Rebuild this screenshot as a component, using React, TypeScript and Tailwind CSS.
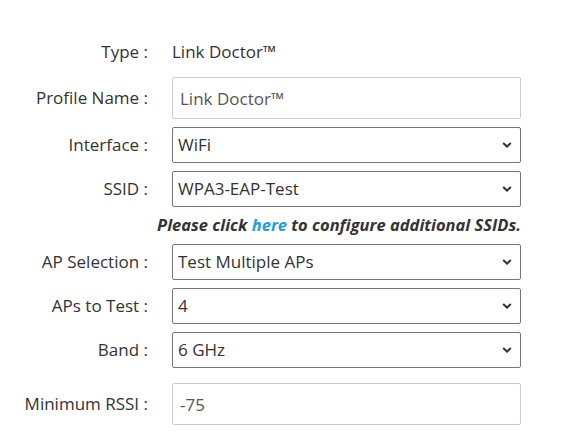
import { ReactNode } from 'react';

function Row({ label, children, className = '' }: { label: string; children: ReactNode; className?: string }) {
  return (
    <div className={`flex items-center ${className}`}>
      <div className="w-[148px] shrink-0 text-right text-[17px] text-[#333]">{label}</div>
      <div className="ml-[24px] w-[349px]">{children}</div>
    </div>
  );
}

function TextBox({ value }: { value: string }) {
  return (
    <input
      readOnly
      value={value}
      className="h-[42px] w-full border border-[#cccccc] rounded-[2px] px-[7px] text-[17px] text-[#555] outline-none"
    />
  );
}

function Select({ value, options }: { value: string; options: string[] }) {
  return (
    <div className="relative">
      <select
        defaultValue={value}
        className="h-[36px] w-full appearance-none border border-[#767676] rounded-[2px] pl-[5px] pr-8 text-[17px] text-[#333] outline-none"
      >
        {options.map((o) => (
          <option key={o}>{o}</option>
        ))}
      </select>
      <svg
        className="pointer-events-none absolute right-[9px] top-1/2 -translate-y-1/2"
        width="10"
        height="7"
        viewBox="0 0 10 7"
      >
        <path d="M1.2 1.5l3.8 3.6 3.8-3.6" fill="none" stroke="#333" strokeWidth="2" />
      </svg>
    </div>
  );
}

export default function App() {
  return (
    <div className="min-h-screen bg-white pt-[34px]" style={{ fontFamily: '"Open Sans", sans-serif' }}>
      <Row label="Type :" className="h-[36px]">
        <span className="text-[17px] text-[#333]">Link Doctor™</span>
      </Row>
      <Row label="Profile Name :" className="mt-[7px]">
        <TextBox value="Link Doctor™" />
      </Row>
      <Row label="Interface :" className="mt-[8px]">
        <Select value="WiFi" options={['WiFi', 'Ethernet']} />
      </Row>
      <Row label="SSID :" className="mt-[8px]">
        <Select value="WPA3-EAP-Test" options={['WPA3-EAP-Test']} />
      </Row>
      <div className="flex h-[37px] w-[521px] items-center justify-end">
        <p className="text-[16.5px] font-bold italic text-[#333]">
          Please click <a href="#" className="text-[#1e9ee0]">here</a> to configure additional SSIDs.
        </p>
      </div>
      <Row label="AP Selection :">
        <Select value="Test Multiple APs" options={['Test Single AP', 'Test Multiple APs']} />
      </Row>
      <Row label="APs to Test :" className="mt-[8px]">
        <Select value="4" options={['1', '2', '3', '4']} />
      </Row>
      <Row label="Band :" className="mt-[8px]">
        <Select value="6 GHz" options={['2.4 GHz', '5 GHz', '6 GHz']} />
      </Row>
      <Row label="Minimum RSSI :" className="mt-[15px]">
        <TextBox value="-75" />
      </Row>
    </div>
  );
}
